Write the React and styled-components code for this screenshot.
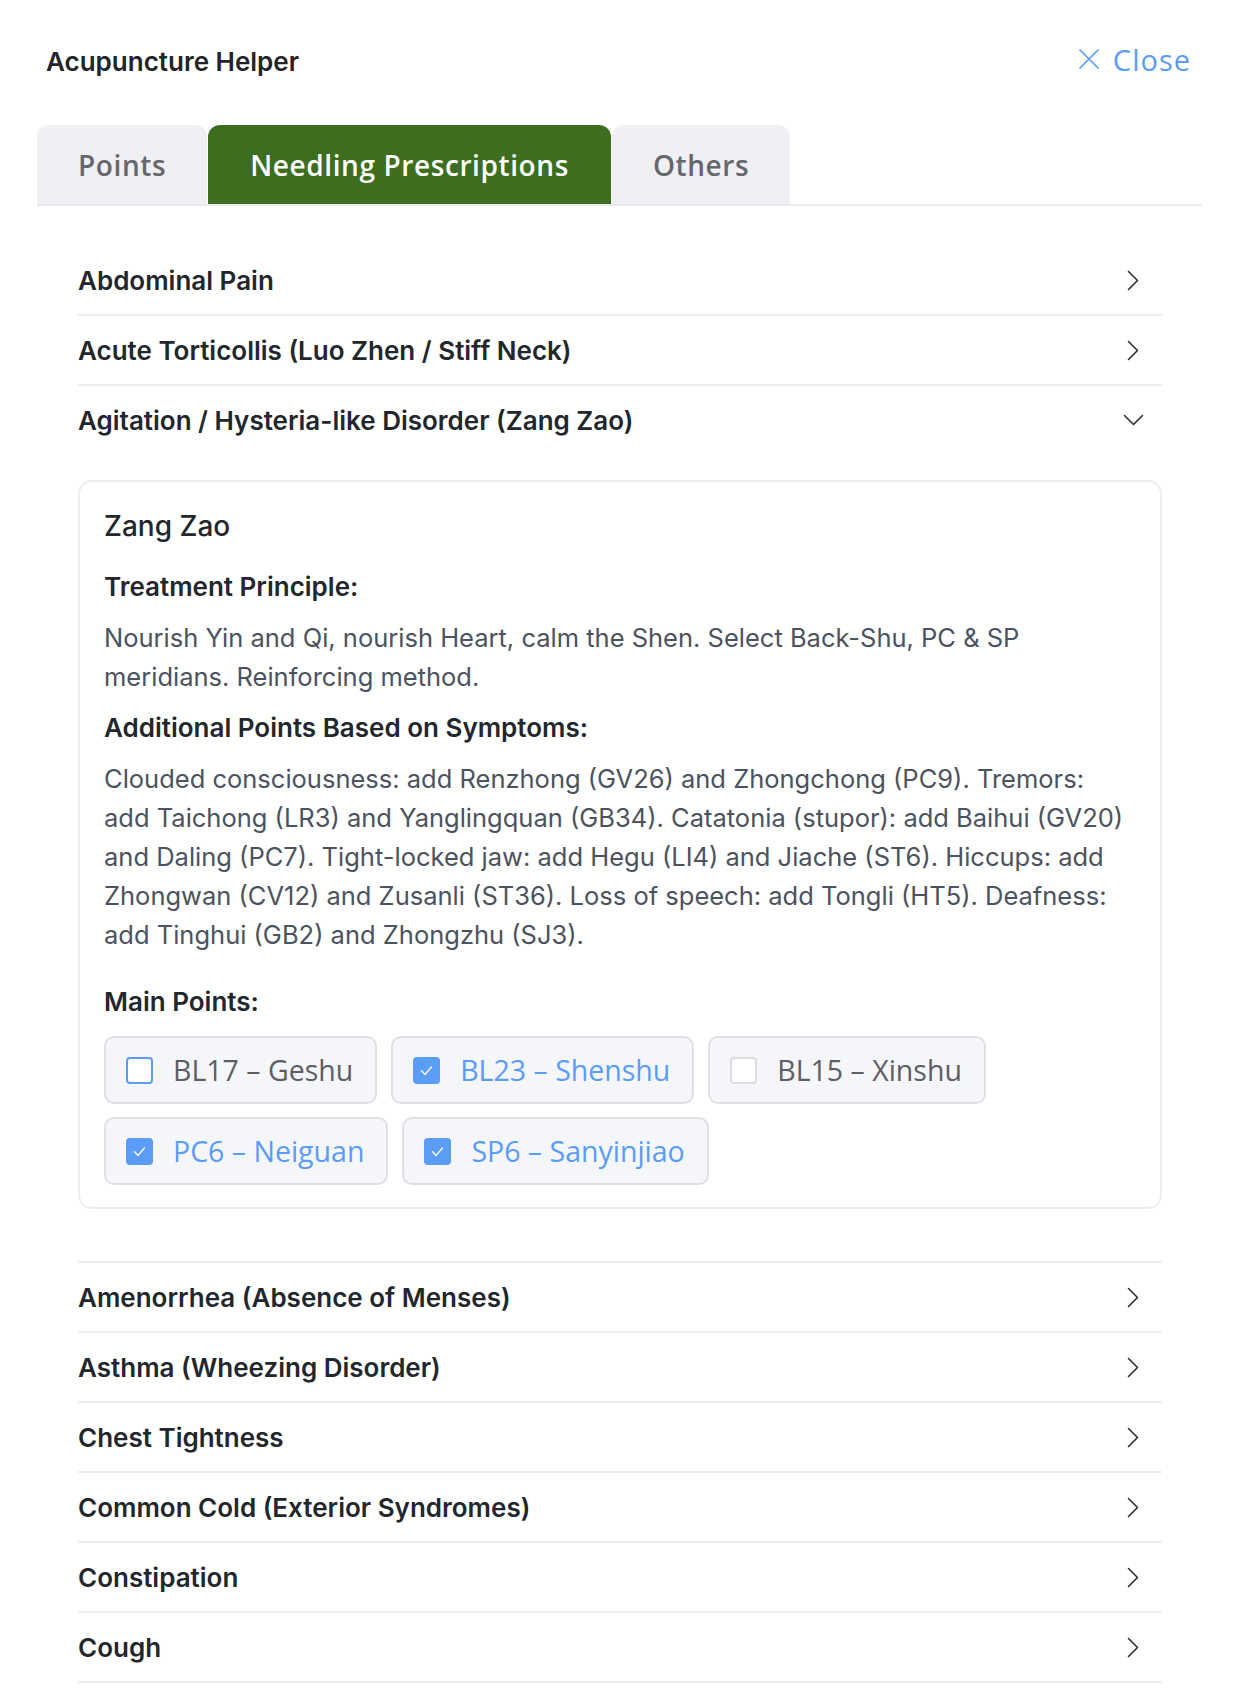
import React, { useState } from 'react';
import styled, { createGlobalStyle } from 'styled-components';

const GlobalStyle = createGlobalStyle`
  body {
    margin: 0;
    background: #ffffff;
    font-family: Inter, "Noto Sans", sans-serif;
    color: #1f2329;
  }
`;

const Page = styled.div`
  padding: 0 42px 40px 37px;
`;

const Header = styled.header`
  height: 122px;
  display: flex;
  align-items: center;
  justify-content: space-between;
  padding: 0 11px 0 9px;
`;

const Title = styled.h1`
  margin: 0;
  font-size: 26px;
  font-weight: 600;
  color: #222428;
`;

const CloseButton = styled.button`
  display: flex;
  align-items: center;
  gap: 14px;
  margin-top: -4px;
  border: 0;
  background: none;
  padding: 0;
  color: #5b9cf5;
  font-family: "Open Sans", sans-serif;
  font-size: 29px;
  font-weight: 500;
  letter-spacing: 1px;
  cursor: pointer;
`;

const TabBar = styled.nav`
  margin-top: 3px;
  display: flex;
  gap: 1px;
  border-bottom: 2px solid #e8eaef;
`;

const Tab = styled.button`
  height: 79px;
  padding: 0 ${(p) => p.$pad}px;
  border: 0;
  border-radius: 12px 12px 0 0;
  background: ${(p) => (p.$active ? '#3d6e1f' : '#eff0f4')};
  color: ${(p) => (p.$active ? '#ffffff' : '#66676c')};
  font-family: "Open Sans", sans-serif;
  font-size: 28px;
  font-weight: 600;
  letter-spacing: 0.6px;
  cursor: pointer;
`;

const List = styled.div`
  margin-top: 40px;
  padding: 0 40px 0 41px;
`;

const Item = styled.div`
  border-bottom: 2px solid #eceef2;
`;

const Row = styled.button`
  width: 100%;
  height: 68px;
  display: flex;
  align-items: center;
  justify-content: space-between;
  padding: 0 17px 0 0;
  border: 0;
  background: none;
  font-family: Inter, "Noto Sans", sans-serif;
  font-size: 26px;
  font-weight: 600;
  color: #22272d;
  text-align: left;
  cursor: pointer;
`;

const ChevronBox = styled.span`
  width: 24px;
  height: 24px;
  display: flex;
  align-items: center;
  justify-content: center;
`;

const Content = styled.div`
  padding: 26px 0 52px;
`;

const Card = styled.section`
  border: 2px solid #eceef2;
  border-radius: 14px;
  padding: 26px 24px 22px;
`;

const CardTitle = styled.h3`
  margin: 0 0 27px;
  font-size: 28px;
  font-weight: 500;
  line-height: 36px;
  color: #22272d;
`;

const Label = styled.h4`
  margin: ${(p) => (p.$spaced ? '32px' : '0')} 0 15px;
  font-size: 26px;
  font-weight: 600;
  line-height: 32px;
  color: #22272d;
`;

const Text = styled.p`
  margin: 0 0 16px;
  font-size: 25.5px;
  line-height: 39px;
  color: #4b5260;
`;

const Chips = styled.div`
  display: flex;
  flex-wrap: wrap;
  gap: 13px 14px;
  margin-top: 18px;
`;

const Chip = styled.label`
  height: 68px;
  box-sizing: border-box;
  display: flex;
  align-items: center;
  gap: 20px;
  padding: 0 22px 0 20px;
  border: 2px solid #dfe0e6;
  border-radius: 10px;
  background: #f5f6fa;
  font-family: "Open Sans", sans-serif;
  font-size: 28.5px;
  color: ${(p) => (p.$checked ? '#5b9cf7' : '#5d5e63')};
  cursor: pointer;
`;

const Box = styled.span`
  width: 27px;
  height: 27px;
  box-sizing: border-box;
  border-radius: 4px;
  display: flex;
  align-items: center;
  justify-content: center;
  background: ${(p) => (p.$checked ? '#5b9cf7' : '#ffffff')};
  border: 2px solid ${(p) => (p.$checked || p.$focus ? '#5b9cf7' : '#dcdde2')};
`;

const CloseIcon = () => (
  <svg width="20" height="20" viewBox="0 0 20 20" fill="none">
    <path d="M1 1 L19 19 M19 1 L1 19" stroke="#5b9cf5" strokeWidth="1.7" strokeLinecap="round" />
  </svg>
);

const ChevronRight = () => (
  <svg width="12" height="21" viewBox="0 0 12 21" fill="none">
    <polyline points="1.5,1.5 10.5,10.5 1.5,19.5" stroke="#2b2f35" strokeWidth="1.6" strokeLinecap="round" strokeLinejoin="round" />
  </svg>
);

const ChevronDown = () => (
  <svg width="21" height="12" viewBox="0 0 21 12" fill="none">
    <polyline points="1.5,1.5 10.5,10.5 19.5,1.5" stroke="#2b2f35" strokeWidth="1.6" strokeLinecap="round" strokeLinejoin="round" />
  </svg>
);

const Check = () => (
  <svg width="17" height="17" viewBox="0 0 24 24" fill="none">
    <polyline points="5,12.5 10,17.5 19,7" stroke="#fff" strokeWidth="2" strokeLinecap="round" strokeLinejoin="round" />
  </svg>
);

const before = ['Abdominal Pain', 'Acute Torticollis (Luo Zhen / Stiff Neck)'];
const after = [
  'Amenorrhea (Absence of Menses)',
  'Asthma (Wheezing Disorder)',
  'Chest Tightness',
  'Common Cold (Exterior Syndromes)',
  'Constipation',
  'Cough',
];

const initialPoints = [
  { id: 'BL17 – Geshu', checked: false, focus: true },
  { id: 'BL23 – Shenshu', checked: true },
  { id: 'BL15 – Xinshu', checked: false },
  { id: 'PC6 – Neiguan', checked: true },
  { id: 'SP6 – Sanyinjiao', checked: true },
];

const ClosedItem = ({ title }) => (
  <Item>
    <Row>
      {title}
      <ChevronBox>
        <ChevronRight />
      </ChevronBox>
    </Row>
  </Item>
);

export default function App() {
  const [points, setPoints] = useState(initialPoints);
  const toggle = (id) =>
    setPoints((ps) => ps.map((p) => (p.id === id ? { ...p, checked: !p.checked } : p)));

  return (
    <Page>
      <GlobalStyle />
      <Header>
        <Title>Acupuncture Helper</Title>
        <CloseButton>
          <CloseIcon />
          Close
        </CloseButton>
      </Header>

      <TabBar>
        <Tab $pad={41}>Points</Tab>
        <Tab $pad={42} $active>Needling Prescriptions</Tab>
        <Tab $pad={41}>Others</Tab>
      </TabBar>

      <List>
        {before.map((t) => (
          <ClosedItem key={t} title={t} />
        ))}
        <Item>
          <Row>
            Agitation / Hysteria-like Disorder (Zang Zao)
            <ChevronBox>
              <ChevronDown />
            </ChevronBox>
          </Row>
          <Content>
            <Card>
              <CardTitle>Zang Zao</CardTitle>
              <Label>Treatment Principle:</Label>
              <Text>
                Nourish Yin and Qi, nourish Heart, calm the Shen. Select Back-Shu, PC &amp; SP
                meridians. Reinforcing method.
              </Text>
              <Label>Additional Points Based on Symptoms:</Label>
              <Text>
                Clouded consciousness: add Renzhong (GV26) and Zhongchong (PC9). Tremors: add
                Taichong (LR3) and Yanglingquan (GB34). Catatonia (stupor): add Baihui (GV20) and
                Daling (PC7). Tight-locked jaw: add Hegu (LI4) and Jiache (ST6). Hiccups: add
                Zhongwan (CV12) and Zusanli (ST36). Loss of speech: add Tongli (HT5). Deafness: add
                Tinghui (GB2) and Zhongzhu (SJ3).
              </Text>
              <Label $spaced>Main Points:</Label>
              <Chips>
                {points.map((p) => (
                  <Chip key={p.id} $checked={p.checked} onClick={() => toggle(p.id)}>
                    <Box $checked={p.checked} $focus={p.focus}>
                      {p.checked && <Check />}
                    </Box>
                    {p.id}
                  </Chip>
                ))}
              </Chips>
            </Card>
          </Content>
        </Item>
        {after.map((t) => (
          <ClosedItem key={t} title={t} />
        ))}
      </List>
    </Page>
  );
}
